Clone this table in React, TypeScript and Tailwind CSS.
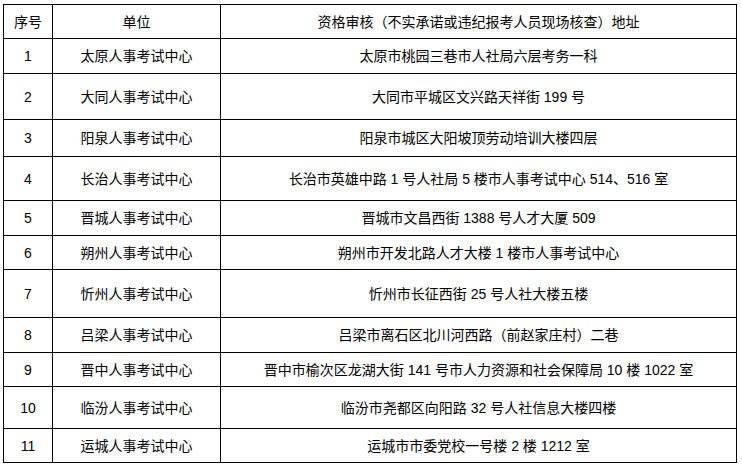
const rows: [string, string, string, number][] = [
  ["1", "太原人事考试中心", "太原市桃园三巷市人社局六层考务一科", 35],
  ["2", "大同人事考试中心", "大同市平城区文兴路天祥街 199 号", 46],
  ["3", "阳泉人事考试中心", "阳泉市城区大阳坡顶劳动培训大楼四层", 37],
  ["4", "长治人事考试中心", "长治市英雄中路 1 号人社局 5 楼市人事考试中心 514、516 室", 44],
  ["5", "晋城人事考试中心", "晋城市文昌西街 1388 号人才大厦 509", 35],
  ["6", "朔州人事考试中心", "朔州市开发北路人才大楼 1 楼市人事考试中心", 34],
  ["7", "忻州人事考试中心", "忻州市长征西街 25 号人社大楼五楼", 48],
  ["8", "吕梁人事考试中心", "吕梁市离石区北川河西路（前赵家庄村）二巷", 35],
  ["9", "晋中人事考试中心", "晋中市榆次区龙湖大街 141 号市人力资源和社会保障局 10 楼 1022 室", 34],
  ["10", "临汾人事考试中心", "临汾市尧都区向阳路 32 号人社信息大楼四楼", 42],
  ["11", "运城人事考试中心", "运城市市委党校一号楼 2 楼 1212 室", 34],
];

const cell = "border border-black p-0 text-center align-middle";

export default function App() {
  return (
    <div className="min-h-[466px] bg-white pt-[4px] pl-[3px] font-['Liberation_Sans','Noto_Sans_CJK_SC',sans-serif] text-[14px] leading-none text-black">
      <table className="table-fixed border-collapse">
        <colgroup>
          <col className="w-[49px]" />
          <col className="w-[168px]" />
          <col className="w-[516px]" />
        </colgroup>
        <thead>
          <tr className="h-[34px]">
            <th className={`${cell} font-normal`}>序号</th>
            <th className={`${cell} font-normal`}>单位</th>
            <th className={`${cell} font-normal`}>资格审核（不实承诺或违纪报考人员现场核查）地址</th>
          </tr>
        </thead>
        <tbody>
          {rows.map(([no, unit, addr, h]) => (
            <tr key={no} style={{ height: h }}>
              <td className={cell}>{no}</td>
              <td className={cell}>{unit}</td>
              <td className={cell}>{addr}</td>
            </tr>
          ))}
        </tbody>
      </table>
    </div>
  );
}
